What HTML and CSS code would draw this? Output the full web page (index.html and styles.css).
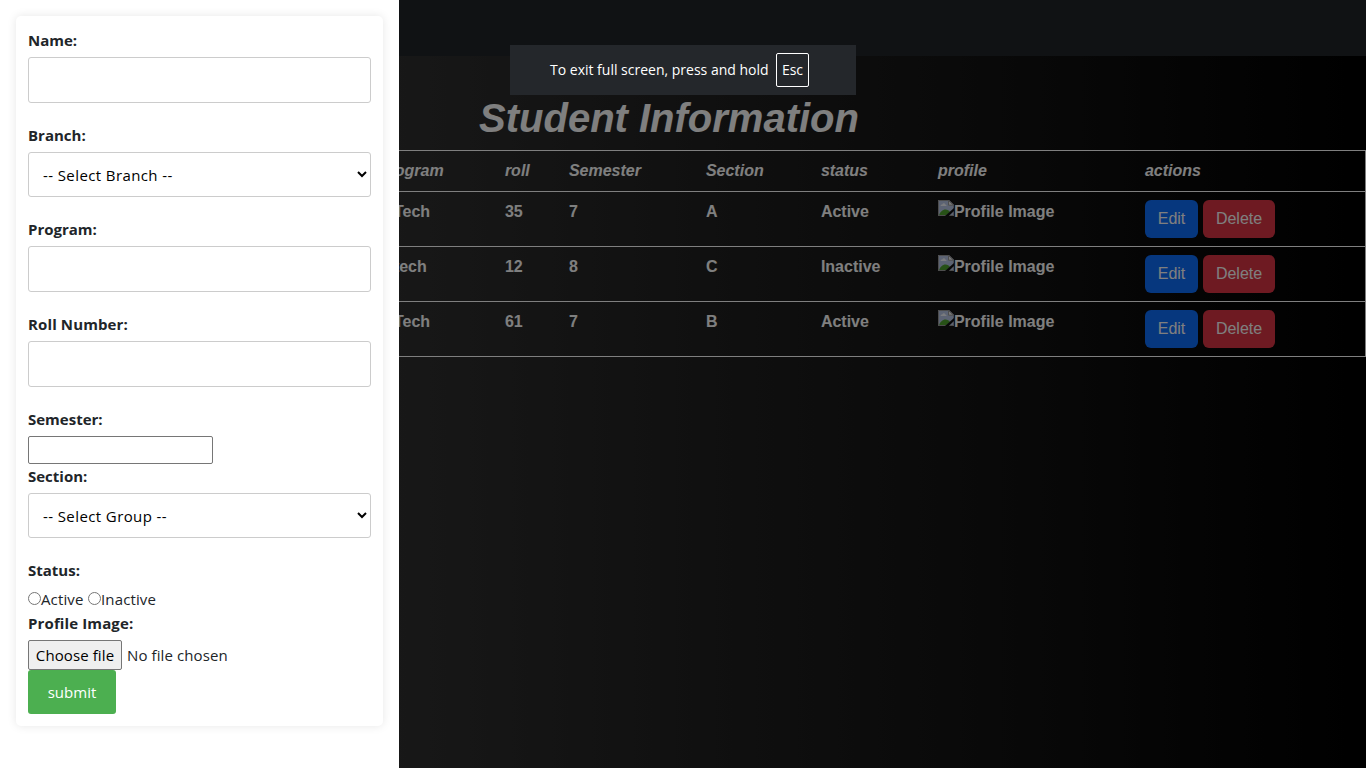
FILE: index.html
```html
<!DOCTYPE html>
<html lang="en">
<head>
<meta charset="utf-8">
<title>Student Information</title>
<link rel="stylesheet" href="styles.css">
</head>
<body>
<svg class="defs" width="0" height="0" aria-hidden="true">
  <symbol id="broken" viewBox="0 0 16 16">
    <path fill="#b9c6e6" d="M0 0h11l5 5v11H0z"/>
    <path fill="#f4f7fd" d="M2.500 6c0-1.200 1-1.700 1.800-1.600C4.800 3 6.800 3 7.100 4.400c1.100 0 1.500.7 1.400 1.600z"/>
    <path fill="#4ea32f" d="M1 15.500c1-3.500 3.500-6 6.500-6 2 0 3.500 1 4.500 2.500L8 15.500z"/>
    <path fill="none" stroke="#9b9b9b" d="M.5 16V.5H11L15.500 5v11M0 15.500h16"/>
    <path fill="#eee" stroke="#9b9b9b" d="M10.500.5v4.700h5z"/>
    <path fill="#111" d="M16 8v3L10.800 16H7z"/>
  </symbol>
</svg>
<main class="page">
  <nav class="navbar"></nav>
  <h1 class="title">Student Information</h1>
  <table class="students">
    <colgroup><col class="c-lead"><col class="c-program"><col class="c-roll"><col class="c-sem"><col class="c-section"><col class="c-status"><col class="c-profile"><col></colgroup>
    <thead>
      <tr><th></th><th>Program</th><th>roll</th><th>Semester</th><th>Section</th><th>status</th><th>profile</th><th>actions</th></tr>
    </thead>
    <tbody>
      <tr><td></td><td>B.Tech</td><td>35</td><td>7</td><td>A</td><td>Active</td><td><span class="photo"><svg><use href="#broken"/></svg>Profile Image</span></td><td><div class="actions"><button class="btn edit">Edit</button><button class="btn delete">Delete</button></div></td></tr>
      <tr><td></td><td>B.tech</td><td>12</td><td>8</td><td>C</td><td>Inactive</td><td><span class="photo"><svg><use href="#broken"/></svg>Profile Image</span></td><td><div class="actions"><button class="btn edit">Edit</button><button class="btn delete">Delete</button></div></td></tr>
      <tr><td></td><td>B.Tech</td><td>61</td><td>7</td><td>B</td><td>Active</td><td><span class="photo"><svg><use href="#broken"/></svg>Profile Image</span></td><td><div class="actions"><button class="btn edit">Edit</button><button class="btn delete">Delete</button></div></td></tr>
    </tbody>
  </table>
</main>
<div class="backdrop"></div>
<aside class="offcanvas">
  <form class="form">
    <label class="label">Name:</label>
    <input class="field" type="text">
    <label class="label">Branch:</label>
    <select class="field select"><option>-- Select Branch --</option></select>
    <label class="label">Program:</label>
    <input class="field" type="text">
    <label class="label wide">Roll Number:</label>
    <input class="field" type="text">
    <label class="label">Semester:</label>
    <input class="small" type="text">
    <label class="label">Section:</label>
    <select class="field select"><option>-- Select Group --</option></select>
    <label class="label">Status:</label>
    <div class="radios"><input type="radio" name="s"><span class="r-active">Active</span><input type="radio" name="s"><span>Inactive</span></div>
    <label class="label wide">Profile Image:</label>
    <div class="file"><button type="button" class="choose">Choose file</button><span class="nofile">No file chosen</span></div>
    <button type="button" class="submit">submit</button>
  </form>
</aside>
<div class="notice"><span class="notice-text">To exit full screen, press and hold</span><kbd class="key">Esc</kbd></div>
</body>
</html>
```
FILE: styles.css
```css
* { box-sizing: border-box; }
body {
  margin: 0;
  height: 768px;
  overflow: hidden;
  font: 16px/24px "Liberation Sans", Arial, sans-serif;
  color: #fff;
}
.defs { position: absolute; }
.page { height: 768px; background: linear-gradient(to right, #434343, #000); }
.navbar { height: 56px; background: #212529; }
.title {
  margin: 0;
  padding: 38px 28px 8px 0;
  height: 94px;
  font-size: 40px;
  line-height: 48px;
  font-style: italic;
  text-align: center;
}
.students {
  width: 1366px;
  table-layout: fixed;
  border-collapse: collapse;
  border: 1px solid #fff;
  font-weight: bold;
}
.c-lead { width: 369px; }
.c-program { width: 127px; }
.c-roll { width: 64px; }
.c-sem { width: 137px; }
.c-section { width: 115px; }
.c-status { width: 117px; }
.c-profile { width: 207px; }
.students th, .students td {
  padding: 8px;
  border-bottom: 1px solid #fff;
  text-align: left;
  text-indent: .4px;
  vertical-align: top;
}
.students th { font-style: italic; }
.photo { display: flex; }
.photo svg { width: 16px; height: 16px; }
.actions { display: flex; gap: 5px; }
.btn {
  height: 38px;
  padding: 0 0 1px;
  border: 0;
  border-radius: 6px;
  color: #fff;
  font: 16px/24px "Liberation Sans", Arial, sans-serif;
  text-indent: 1px;
}
.edit { width: 53px; background: #0d6efd; }
.delete { width: 72px; background: #dc3545; }
.backdrop { position: absolute; inset: 0; background: rgba(0, 0, 0, .5); }
.offcanvas {
  position: absolute;
  left: 0;
  top: 0;
  width: 399px;
  height: 768px;
  padding: 16px;
  background: #fff;
  color: #212529;
  font-family: "Open Sans", "Noto Sans", sans-serif;
  font-size: 15px;
}
.form {
  display: flex;
  flex-direction: column;
  align-items: flex-start;
  width: 367px;
  height: 710px;
  padding: 12px;
  border-radius: 5px;
  box-shadow: 0 0 10px rgba(0, 0, 0, .1);
}
.label { height: 24px; margin-bottom: 5px; font-weight: bold; }
.wide { letter-spacing: .12px; }
.field {
  width: 343px;
  height: 46px;
  margin: 0 0 20px;
  border: 1px solid #ccc;
  border-radius: 3px;
  background: #fff;
}
.select {
  height: 45px;
  padding: 0 0 0 10px;
  color: #000;
  font: 15px "Open Sans", sans-serif;
  letter-spacing: .4px;
}
.small {
  width: 185px;
  height: 28px;
  border: 1px solid #767676;
  border-radius: 2px;
}
.radios { display: flex; height: 24px; letter-spacing: .12px; }
.radios input { width: 13px; height: 13px; margin: 5px 0 0; }
.r-active { margin-right: 4.6px; }
.file { display: flex; align-items: center; height: 30px; gap: 5px; }
.nofile { letter-spacing: .1px; }
.choose {
  width: 94px;
  height: 30px;
  padding: 0;
  border: 1px solid #767676;
  border-radius: 2px;
  background: #efefef;
  color: #000;
  font: 15px "Open Sans", sans-serif;
  letter-spacing: .1px;
}
.submit {
  width: 88px;
  height: 44px;
  padding: 0;
  border: 0;
  border-radius: 3px;
  background: #4caf50;
  color: #fff;
  font: 15px "Open Sans", sans-serif;
}
.notice {
  position: absolute;
  left: 510px;
  top: 45px;
  width: 346px;
  height: 50px;
  display: flex;
  align-items: center;
  padding-left: 40px;
  gap: 7px;
  background: #24272b;
  font-family: "Open Sans", sans-serif;
  font-size: 14px;
}
.notice-text { width: 219px; white-space: nowrap; }
.key {
  width: 33px;
  height: 34px;
  border: 1px solid #fff;
  border-radius: 2px;
  font: 14px/31px "Open Sans", sans-serif;
  text-align: center;
}
```
